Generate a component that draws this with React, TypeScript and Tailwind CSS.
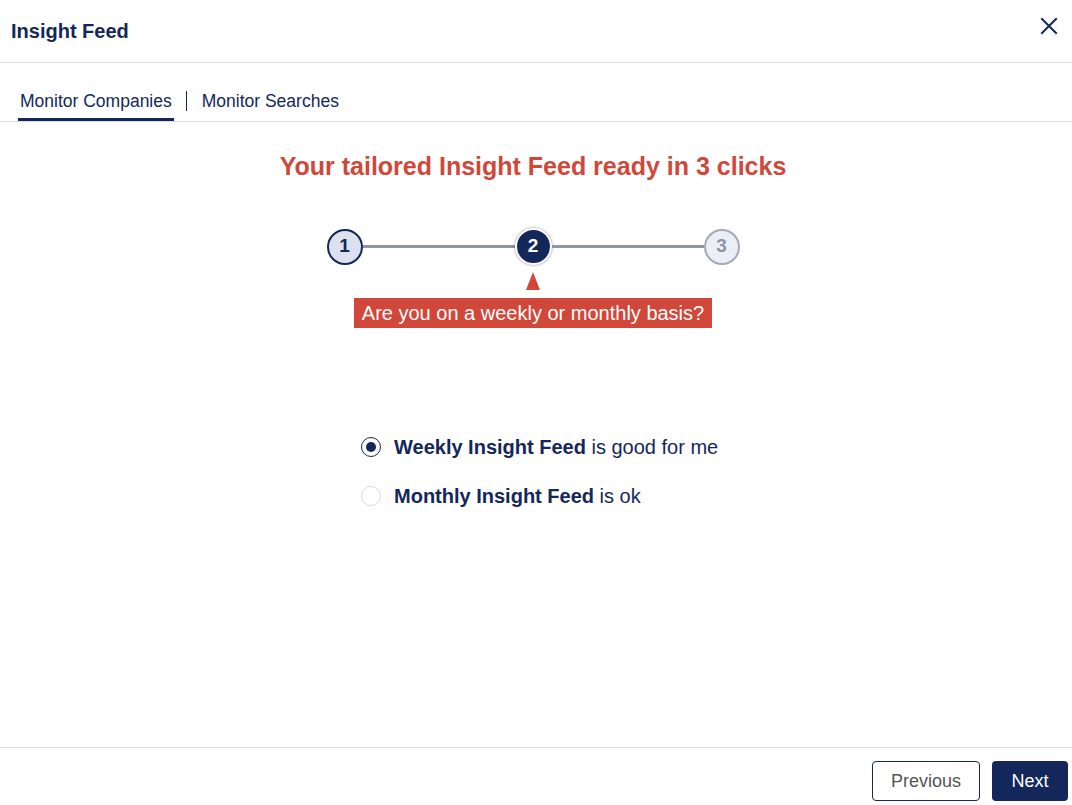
const NAVY = 'text-[#14275b]';

const STEPS = [1, 2, 3];
const ACTIVE_STEP = 2;

function CloseIcon() {
  return (
    <svg width="18" height="18" viewBox="0 0 18 18" fill="none" stroke="#14275b" strokeWidth="2" strokeLinecap="square">
      <path d="M2 2 16 16M16 2 2 16" />
    </svg>
  );
}

function StepCircle({ step }: { step: number }) {
  if (step < ACTIVE_STEP) {
    return (
      <div className="flex h-[36px] w-[36px] items-center justify-center rounded-full border-2 border-[#14275b] bg-[#dde1ee] text-[19px] font-bold text-[#14275b]">
        {step}
      </div>
    );
  }
  if (step === ACTIVE_STEP) {
    return (
      <div className="flex h-[37px] w-[37px] items-center justify-center rounded-full border-2 border-white bg-[#14275b] text-[19px] font-bold text-white shadow-[0_0_3px_rgba(0,0,0,0.45)]">
        {step}
      </div>
    );
  }
  return (
    <div className="flex h-[36px] w-[36px] items-center justify-center rounded-full border-2 border-[#a3a9bb] bg-[#eceef6] text-[19px] font-bold text-[#8c93a7]">
      {step}
    </div>
  );
}

function Radio({ checked }: { checked: boolean }) {
  return checked ? (
    <span className="flex h-[20px] w-[20px] shrink-0 items-center justify-center rounded-full border-[1.5px] border-[#14275b] bg-white">
      <span className="h-[10px] w-[10px] rounded-full bg-[#14275b]" />
    </span>
  ) : (
    <span className="h-[20px] w-[20px] shrink-0 rounded-full border border-[#d9d9d9] bg-white" />
  );
}

export default function App() {
  return (
    <div className="flex h-[805px] w-full flex-col bg-white font-['Liberation_Sans',Arial,sans-serif]">
      <header className="flex h-[63px] shrink-0 items-center justify-between border-b border-[#dddddd] pl-[11px] pr-[11px]">
        <h1 className={`text-[20px] font-bold ${NAVY}`}>Insight Feed</h1>
        <button className="-mt-[10px] flex h-[24px] w-[24px] items-center justify-center">
          <CloseIcon />
        </button>
      </header>

      <nav className="flex shrink-0 items-end border-b border-[#dddddd] pl-[18px] pt-[26px]">
        <button className={`border-b-[3px] border-[#14275b] px-[2px] pb-[4px] text-[17.5px] leading-[25px] ${NAVY}`}>
          Monitor Companies
        </button>
        <span className="ml-[12px] mr-[13px] mb-[10px] h-[20px] w-px bg-[#14275b]" />
        <button className={`px-[2px] pb-[7px] text-[17.5px] leading-[25px] ${NAVY}`}>Monitor Searches</button>
      </nav>

      <main className="flex flex-1 flex-col items-center pr-[6px]">
        <h2 className="mt-[29px] text-[25px] font-bold leading-[30px] text-[#d1473a]">
          Your tailored Insight Feed ready in 3 clicks
        </h2>

        <div className="mt-[47px] flex items-center">
          {STEPS.map((step, i) => (
            <div key={step} className="flex items-center">
              {i > 0 && <span className="h-[3px] w-[152px] bg-[#8d95a6]" />}
              <StepCircle step={step} />
            </div>
          ))}
        </div>

        <span className="mt-[7px] h-0 w-0 border-x-[7px] border-b-[18px] border-x-transparent border-b-[#d1473a]" />
        <p className="mt-[8px] bg-[#d1473a] px-[8px] text-[20px] leading-[30px] text-white">
          Are you on a weekly or monthly basis?
        </p>

        <div className={`ml-[13px] mt-[104px] flex w-[357px] flex-col gap-[19px] whitespace-nowrap text-[20px] leading-[30px] ${NAVY}`}>
          <label className="flex items-center gap-[13px]">
            <Radio checked />
            <span>
              <b>Weekly Insight Feed</b> is good for me
            </span>
          </label>
          <label className="flex items-center gap-[13px]">
            <Radio checked={false} />
            <span>
              <b>Monthly Insight Feed</b> is ok
            </span>
          </label>
        </div>
      </main>

      <footer className="flex h-[58px] shrink-0 items-start justify-end gap-[12px] border-t border-[#dddddd] pr-[4px] pt-[13px]">
        <button className="h-[40px] w-[108px] rounded-[4px] border border-[#14275b] bg-white text-[18px] text-[#555555]">
          Previous
        </button>
        <button className="h-[40px] w-[76px] rounded-[4px] bg-[#14275b] text-[18px] text-white">Next</button>
      </footer>
    </div>
  );
}
